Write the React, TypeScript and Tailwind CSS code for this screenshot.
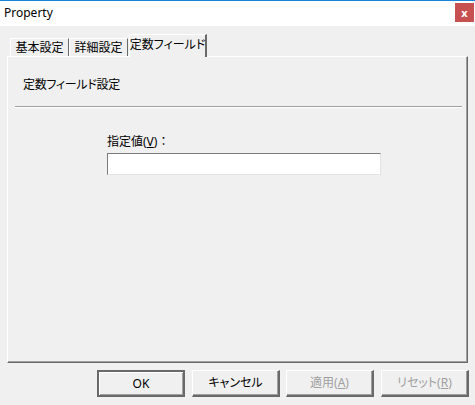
import React from "react";

function Tab({ label, selected }: { label: string; selected?: boolean }) {
  if (selected) {
    return (
      <div className="relative z-10 -mb-px ml-px flex h-[23px] w-[78px] items-start justify-center whitespace-nowrap border-l border-t border-white border-r-2 border-r-[#696969] bg-[#f0f0f0] pt-[1px] text-[12px] text-black">
        {label}
      </div>
    );
  }
  return (
    <div className="flex h-[18px] w-[59px] items-center justify-center whitespace-nowrap border-l border-t border-white border-r border-r-[#696969] text-[12px] text-black">
      {label}
    </div>
  );
}

function Btn({
  children,
  def,
  disabled,
  className = "",
}: {
  children: React.ReactNode;
  def?: boolean;
  disabled?: boolean;
  className?: string;
}) {
  return (
    <div
      className={
        "flex h-[27px] w-[88px] items-center justify-center whitespace-nowrap text-[12px] " +
        (def
          ? "border-2 border-[#696969] shadow-[inset_1px_1px_0_#ffffff,inset_-1px_-1px_0_#a0a0a0] "
          : "border-l border-t border-white border-r-2 border-b-2 border-r-[#696969] border-b-[#696969] shadow-[inset_-1px_-1px_0_#a0a0a0] ") +
        (disabled ? "text-[#a0a0a0] " : "text-black ") +
        className
      }
    >
      {children}
    </div>
  );
}

export default function App() {
  return (
    <div className="flex h-[405px] w-[475px] flex-col bg-[#f0f0f0] font-['Noto_Sans','Noto_Sans_CJK_JP',sans-serif] [font-feature-settings:'palt']">
      <div className="flex h-[26px] items-start justify-between border-t border-[#1883d7] bg-white">
        <div className="pl-[4px] pt-[3px] text-[12px] text-black">Property</div>
        <div className="mr-[1px] mt-[2px] flex h-[19px] w-[19px] items-center justify-center bg-[#c75050] text-[11px] font-bold leading-none text-white">
          x
        </div>
      </div>

      <div className="flex items-end pl-[10px] pt-[8px]">
        <Tab label="基本設定" />
        <Tab label="詳細設定" />
        <Tab label="定数フィールド" selected />
      </div>

      <div className="ml-[7px] flex h-[307px] w-[461px] flex-col border-l border-t border-white border-r border-b border-r-[#696969] border-b-[#696969] shadow-[inset_-1px_-1px_0_#a0a0a0]">
        <div className="pl-[15px] pt-[20px] text-[12px] leading-[16px] tracking-[-0.3px] text-black">定数フィールド設定</div>
        <div className="ml-[7px] mt-[13px] h-[2px] w-[447px] border-t border-[#a0a0a0] border-b border-b-white" />
        <div className="ml-[99px] mt-[26px] text-[12px] leading-[16px] text-black [font-feature-settings:normal]">
          指定値(<span className="underline">V</span>)：
        </div>
        <div className="ml-[99px] mt-[3px] h-[22px] w-[274px] border-l border-t border-[#7a7a7a] border-r border-b border-r-[#e3e3e3] border-b-[#e3e3e3] bg-white" />
      </div>

      <div className="flex pl-[97px] pt-[7px]">
        <Btn def>OK</Btn>
        <Btn className="ml-[7px]">キャンセル</Btn>
        <Btn disabled className="ml-[6px]">
          適用(<span className="underline">A</span>)
        </Btn>
        <Btn disabled className="ml-[7px]">
          リセット(<span className="underline">R</span>)
        </Btn>
      </div>
    </div>
  );
}
